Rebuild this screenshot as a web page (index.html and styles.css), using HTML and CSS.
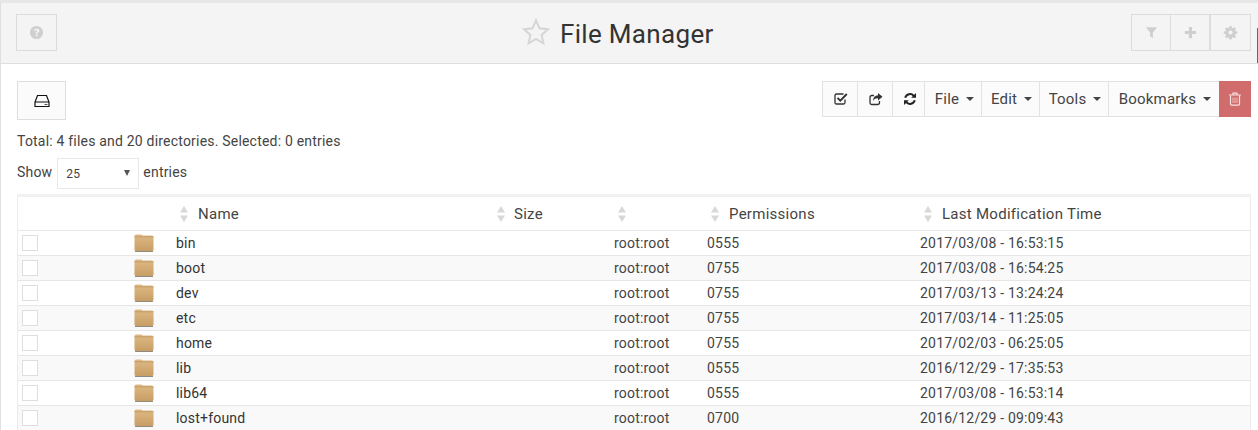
FILE: index.html
```html
<!DOCTYPE html>
<html lang="en">
<head>
<meta charset="utf-8">
<title>File Manager</title>
<link rel="stylesheet" href="styles.css">
</head>
<body>
<svg class="defs" width="0" height="0" aria-hidden="true">
  <defs>
    <linearGradient id="fg" x1="0" y1="0" x2="0" y2="1">
      <stop offset="0" stop-color="#dfba84"/>
      <stop offset="1" stop-color="#c79e65"/>
    </linearGradient>
    <symbol id="folder" viewBox="0 0 20 18">
      <path d="M.5 2Q.5 .5 2 .5h5q1 0 1.500 1H18q1.500 0 1.500 1.500v12.500q0 1.500-1.500 1.500H2q-1.500 0-1.500-1.500z" fill="url(#fg)"/>
      <path d="M.5 2.800h19" stroke="#b8925d" stroke-width=".7" fill="none"/>
      <path d="M1 17.500h18" stroke="#8f8a82" stroke-width="1" fill="none"/>
    </symbol>
    <symbol id="sort" viewBox="0 0 10 16">
      <path d="M5 0l4 6.500H1zM5 16L1 9.500h8z" fill="#d8d8d8"/>
    </symbol>
  </defs>
</svg>
<div class="page">
  <header class="titlebar">
    <div class="btn-set">
      <span class="tb-btn tb-help"><svg class="ic" viewBox="0 0 16 16"><path fill="#cfcfcf" fill-rule="evenodd" d="M8 1a7 7 0 1 0 0 14A7 7 0 0 0 8 1zM5.400 6.200C5.600 4.600 6.700 3.800 8.200 3.800c1.600 0 2.800 .9 2.800 2.300 0 1-.6 1.600-1.300 2-.5.400-.7.600-.7 1.100H7.100c0-1 .3-1.600 1-2.100.5-.4.800-.6.800-1 0-.4-.3-.7-.8-.7-.6 0-.9.300-1 .9zM7.100 10h1.900v1.900H7.100z"/></svg></span>
    </div>
    <h1 class="title"><svg class="star" viewBox="0 0 28 28"><path d="M14 2.500l3.500 7.800 8.500 .9-6.400 5.700 1.800 8.400L14 20.900l-7.400 4.400 1.800-8.400L2 11.200l8.500-.9z" fill="none" stroke="#d5d5d5" stroke-width="2"/></svg><span>File Manager</span></h1>
    <div class="btn-set">
      <span class="tb-btn tb-a"><svg class="ic" viewBox="0 0 16 16"><path fill="#cfcfcf" d="M2 2.500h12L9.500 8v6l-3-2V8z"/></svg></span>
      <span class="tb-btn tb-b"><svg class="ic" viewBox="0 0 16 16"><path fill="#cfcfcf" d="M6.300 2h3.400v4.300H14v3.400H9.700V14H6.300V9.700H2V6.300h4.300z"/></svg></span>
      <span class="tb-btn tb-c"><svg class="ic" viewBox="0 0 16 16"><path fill="#cfcfcf" fill-rule="evenodd" d="M6.800 1h2.400l.3 1.900 1.100.5 1.600-1.100 1.700 1.700-1.100 1.600.5 1.100 1.900.3v2.400l-1.900.3-.5 1.100 1.100 1.600-1.700 1.700-1.600-1.100-1.100.5-.3 1.900H6.800l-.3-1.900-1.100-.5-1.600 1.100-1.700-1.700 1.100-1.600-.5-1.100L.8 9.400V7l1.900-.3.500-1.100-1.100-1.600 1.700-1.700 1.600 1.100 1.100-.5zM8 5.800a2.200 2.200 0 1 0 0 4.400 2.200 2.200 0 0 0 0-4.400z"/></svg></span>
    </div>
    <i class="edge-mark"></i>
  </header>
  <main class="content">
    <div class="toolbar">
      <span class="drive-btn"><svg class="drive" viewBox="0 0 16 14"><path d="M3.500 1.500h9L15 8v4.500H1V8zM1 8h14" fill="none" stroke="#111" stroke-width="1.200"/><path d="M10.500 10h3v1h-3z" fill="#555"/></svg></span>
      <div class="actions">
        <span class="act act-a"><svg class="ai" viewBox="0 0 14 14"><path d="M11 7.500v3q0 1.500-1.500 1.500h-7Q1 12 1 10.500v-7Q1 2 2.500 2h7" fill="none" stroke="#333" stroke-width="1.300"/><path d="M3.500 5.800l2.800 2.800L12.800 2" fill="none" stroke="#333" stroke-width="1.900"/></svg></span>
        <span class="act act-b"><svg class="ai" viewBox="0 0 14 14"><path d="M10.500 9v1.500Q10.500 12.500 8.500 12.500H3Q1 12.500 1 10.500V5.500Q1 3.500 3 3.500H5" fill="none" stroke="#333" stroke-width="1.300"/><path d="M9 1l4.500 3.800L9 8.500V6.300C6.500 6.300 5 7 4 9c0-3.500 2-5.500 5-5.700z" fill="#333"/></svg></span>
        <span class="act act-c"><svg class="ai" viewBox="0 0 14 14"><path d="M2.200 5.700A5 5 0 0 1 10.800 3.800M11.800 8.300A5 5 0 0 1 3.200 10.200" fill="none" stroke="#222" stroke-width="2"/><path d="M13 1v4.800H8.200zM1 13V8.200h4.800z" fill="#222"/></svg></span>
        <span class="act act-menu act-file">File<i class="caret"></i></span>
        <span class="act act-menu act-edit">Edit<i class="caret"></i></span>
        <span class="act act-menu act-tools">Tools<i class="caret"></i></span>
        <span class="act act-menu act-book">Bookmarks<i class="caret"></i></span>
        <span class="act act-del"><svg class="ai" viewBox="0 0 14 14"><path d="M1 3h12M5 3V1.200h4V3" fill="none" stroke="#f6e2e2" stroke-width="1.200"/><path d="M2.500 3.500V12q0 1.200 1.200 1.200h6.600q1.200 0 1.200-1.200V3.500" fill="none" stroke="#f6e2e2" stroke-width="1.200"/><path d="M5 5.500v5.500M7 5.500v5.500M9 5.500v5.500" stroke="#eebcbc" stroke-width="1"/></svg></span>
      </div>
    </div>
    <p class="summary">Total: 4 files and 20 directories. Selected: 0 entries</p>
    <div class="length"><span class="len-label">Show</span><span class="select"><span>25</span><i class="select-arrow"></i></span><span class="len-label">entries</span></div>
    <div class="table-wrap">
      <table class="files">
        <colgroup><col class="w-check"><col class="w-icon"><col class="w-name"><col class="w-size"><col class="w-owner"><col class="w-perm"><col class="w-time"></colgroup>
        <thead>
          <tr>
            <th colspan="2"></th>
            <th><svg class="sort"><use href="#sort"/></svg>Name</th>
            <th class="th-size"><svg class="sort"><use href="#sort"/></svg>Size</th>
            <th><svg class="sort"><use href="#sort"/></svg></th>
            <th><svg class="sort"><use href="#sort"/></svg>Permissions</th>
            <th><svg class="sort"><use href="#sort"/></svg>Last Modification Time</th>
          </tr>
        </thead>
        <tbody>
          <tr><td class="td-check"><i class="check"></i></td><td><svg class="folder"><use href="#folder"/></svg></td><td class="td-name">bin</td><td></td><td>root:root</td><td>0555</td><td>2017/03/08 - 16:53:15</td></tr>
          <tr><td class="td-check"><i class="check"></i></td><td><svg class="folder"><use href="#folder"/></svg></td><td class="td-name">boot</td><td></td><td>root:root</td><td>0755</td><td>2017/03/08 - 16:54:25</td></tr>
          <tr><td class="td-check"><i class="check"></i></td><td><svg class="folder"><use href="#folder"/></svg></td><td class="td-name">dev</td><td></td><td>root:root</td><td>0755</td><td>2017/03/13 - 13:24:24</td></tr>
          <tr><td class="td-check"><i class="check"></i></td><td><svg class="folder"><use href="#folder"/></svg></td><td class="td-name">etc</td><td></td><td>root:root</td><td>0755</td><td>2017/03/14 - 11:25:05</td></tr>
          <tr><td class="td-check"><i class="check"></i></td><td><svg class="folder"><use href="#folder"/></svg></td><td class="td-name">home</td><td></td><td>root:root</td><td>0755</td><td>2017/02/03 - 06:25:05</td></tr>
          <tr><td class="td-check"><i class="check"></i></td><td><svg class="folder"><use href="#folder"/></svg></td><td class="td-name">lib</td><td></td><td>root:root</td><td>0555</td><td>2016/12/29 - 17:35:53</td></tr>
          <tr><td class="td-check"><i class="check"></i></td><td><svg class="folder"><use href="#folder"/></svg></td><td class="td-name">lib64</td><td></td><td>root:root</td><td>0555</td><td>2017/03/08 - 16:53:14</td></tr>
          <tr><td class="td-check"><i class="check"></i></td><td><svg class="folder"><use href="#folder"/></svg></td><td class="td-name">lost+found</td><td></td><td>root:root</td><td>0700</td><td>2016/12/29 - 09:09:43</td></tr>
        </tbody>
      </table>
    </div>
  </main>
</div>
</body>
</html>
```
FILE: styles.css
```css
* { box-sizing: border-box; }
html, body { margin: 0; height: 100%; overflow: hidden; background: #fff; }
body { font-family: Roboto, "Liberation Sans", sans-serif; font-size: 14px; color: #444; letter-spacing: .2px; }
.defs { display: block; height: 0; }
.page { height: 430px; border-top: 3px solid #e7e7e7; border-left: 1px solid #e0e0e0; overflow: hidden; }
.titlebar { height: 61px; background: #f4f4f4; border-bottom: 1px solid #dedede; padding: 11px 7px 0 15px; display: flex; justify-content: space-between; align-items: flex-start; position: relative; }
.edge-mark { position: absolute; right: 0; top: 25px; width: 1px; height: 35px; background: #666; }
.btn-set { display: flex; }
.tb-btn { height: 37px; border: 1px solid #dcdcdc; display: flex; align-items: center; justify-content: center; }
.tb-help { width: 41px; }
.tb-a { width: 40px; }
.tb-b { width: 39px; border-left: 0; }
.tb-c { width: 41px; }
.ic { width: 15px; height: 15px; }
.title { position: absolute; left: 521px; top: 14px; margin: 0; display: flex; align-items: center; gap: 10px; font-size: 26px; font-weight: 400; color: #333; line-height: 34px; letter-spacing: .32px; }
.star { width: 28px; height: 28px; margin-top: -4px; }
.content { padding: 17px 0 0 16px; }
.toolbar { display: flex; justify-content: space-between; align-items: flex-start; padding-right: 7px; }
.drive-btn { width: 49px; height: 39px; background: #fbfbfb; border: 1px solid #dedede; display: flex; align-items: center; justify-content: center; }
.drive { width: 16px; height: 14px; }
.actions { display: flex; height: 36px; background: #fbfbfb; border: 1px solid #e2e2e2; border-right: 0; }
.act { display: flex; align-items: center; justify-content: center; border-left: 1px solid #e2e2e2; font-size: 15px; letter-spacing: .2px; color: #444; }
.act:first-child { border-left: 0; }
.act-a { width: 34px; padding-left: 2px; }
.act-b { width: 35px; padding-left: 2px; }
.act-c { width: 32px; padding-left: 2px; }
.act-menu { gap: 7px; padding-left: 2px; }
.act-file { width: 57px; padding-left: 3px; }
.act-edit { width: 58px; }
.act-tools { width: 69px; }
.act-book { width: 111px; }
.act-del { width: 32px; height: 36px; margin: -1px 0; background: #d16c6c; border-left: 0; }
.ai { width: 14px; height: 14px; }
.caret { width: 0; height: 0; border-left: 4px solid transparent; border-right: 4px solid transparent; border-top: 4px solid #444; }
.summary { margin: 0; line-height: 20px; padding-top: 11px; height: 32px; }
.length { display: flex; align-items: center; gap: 4px; height: 31px; margin-top: 6px; }
.len-label { padding-bottom: 3px; }
.select { width: 82px; height: 31px; margin-left: 1px; border: 1px solid #e8e8e8; display: flex; align-items: center; justify-content: space-between; padding: 0 8px; font-size: 12px; }
.select-arrow { width: 0; height: 0; border-left: 3px solid transparent; border-right: 3px solid transparent; border-top: 6px solid #555; margin-bottom: 2px; }
.table-wrap { width: 1234px; margin-top: 5px; border-top: 3px solid #f1f1f1; border-left: 1px solid #ececec; border-right: 1px solid #ececec; }
.files { width: 1232px; border-collapse: separate; border-spacing: 0; table-layout: fixed; }
.w-check { width: 116px; }
.w-icon { width: 42px; }
.w-name { width: 317px; }
.w-size { width: 121px; }
.w-owner { width: 93px; }
.w-perm { width: 213px; }
.w-time { width: 330px; }
.files th { height: 34px; padding: 0 0 0 3px; text-align: left; font-weight: 400; color: #444; font-size: 15px; letter-spacing: .27px; border-bottom: 1px solid #e6e6e6; white-space: nowrap; }
.files td { height: 25px; padding: 0; color: #444; border-bottom: 1px solid #e6e6e6; white-space: nowrap; vertical-align: middle; }
.files tbody tr:nth-child(even) td { background: #f9f9f9; }
.sort { width: 10px; height: 16px; vertical-align: -3px; margin-right: 9px; }
.th-size .sort { margin-right: 8px; }
.td-check { padding-left: 4px !important; }
.check { display: block; width: 16px; height: 16px; border: 1px solid #dedede; background: #fff; }
.td-name { color: #333 !important; }
.folder { display: block; width: 20px; height: 18px; }
```
